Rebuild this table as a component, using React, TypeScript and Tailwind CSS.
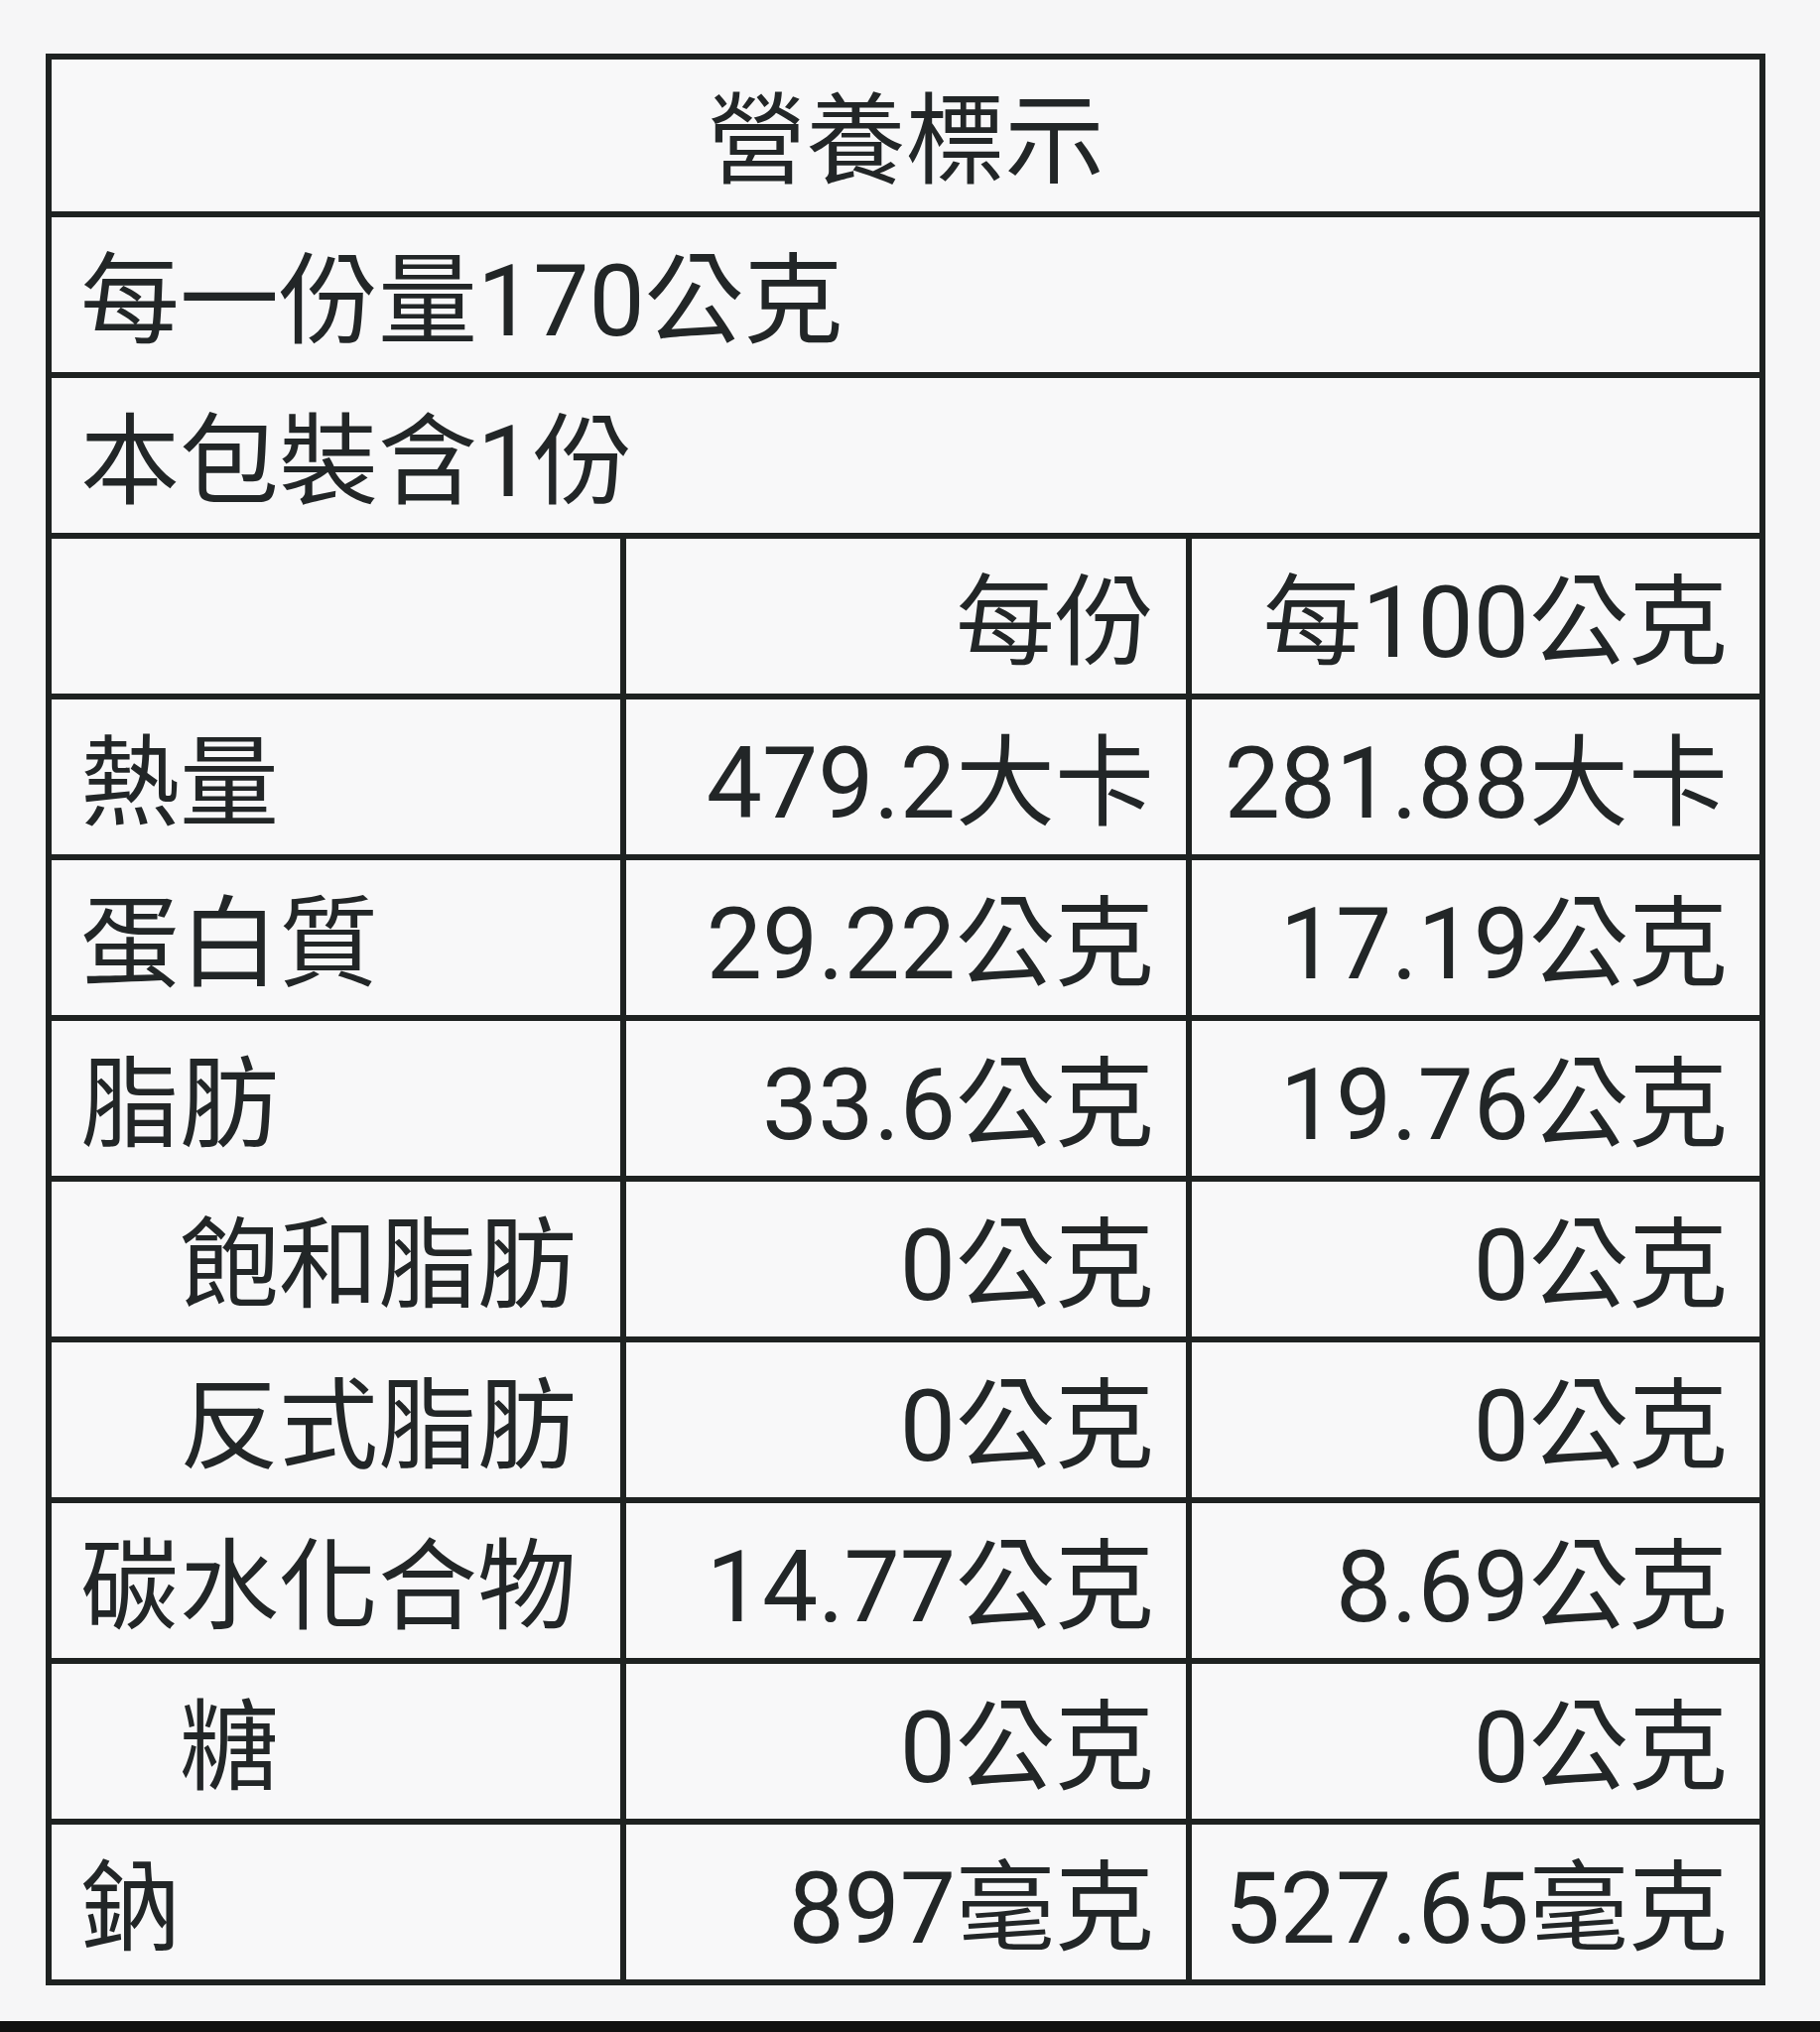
const font = { fontFamily: 'Roboto, "Noto Sans CJK TC", sans-serif' };

type Row = { label: string; perServing: string; per100: string; indent?: boolean };

const rows: Row[] = [
  { label: "熱量", perServing: "479.2大卡", per100: "281.88大卡" },
  { label: "蛋白質", perServing: "29.22公克", per100: "17.19公克" },
  { label: "脂肪", perServing: "33.6公克", per100: "19.76公克" },
  { label: "飽和脂肪", perServing: "0公克", per100: "0公克", indent: true },
  { label: "反式脂肪", perServing: "0公克", per100: "0公克", indent: true },
  { label: "碳水化合物", perServing: "14.77公克", per100: "8.69公克" },
  { label: "糖", perServing: "0公克", per100: "0公克", indent: true },
  { label: "鈉", perServing: "897毫克", per100: "527.65毫克" },
];

function GridRow({ label, perServing, per100, indent }: Row) {
  return (
    <div className="grid h-[162px] grid-cols-[573px_570px_1fr] border-t-[6px] border-[#1e2221]">
      <div className={`flex items-center pt-[13px] ${indent ? "pl-[129px]" : "pl-[29px]"}`}>{label}</div>
      <div className="flex items-center justify-end border-l-[6px] border-[#1e2221] pt-[13px] pr-[32px]">
        {perServing}
      </div>
      <div className="flex items-center justify-end border-l-[6px] border-[#1e2221] pt-[13px] pr-[32px]">
        {per100}
      </div>
    </div>
  );
}

export default function App() {
  return (
    <div className="flex h-[2048px] flex-col bg-[#f6f6f7]" style={font}>
      <div className="ml-[46px] mt-[54px] w-[1733px] border-[6px] border-[#1e2221] bg-[#f8f8f9] text-[100px] leading-none text-[#222627]">
        <div className="flex h-[153px] items-center justify-center pt-[13px]">營養標示</div>
        <div className="flex h-[162px] items-center border-t-[6px] border-[#1e2221] pt-[13px] pl-[29px]">
          每一份量170公克
        </div>
        <div className="flex h-[162px] items-center border-t-[6px] border-[#1e2221] pt-[13px] pl-[29px]">
          本包裝含1份
        </div>
        <GridRow label="" perServing="每份" per100="每100公克" />
        {rows.map((row) => (
          <GridRow key={row.label} {...row} />
        ))}
      </div>
      <div className="mt-auto h-[11px] bg-[#111]" />
    </div>
  );
}
